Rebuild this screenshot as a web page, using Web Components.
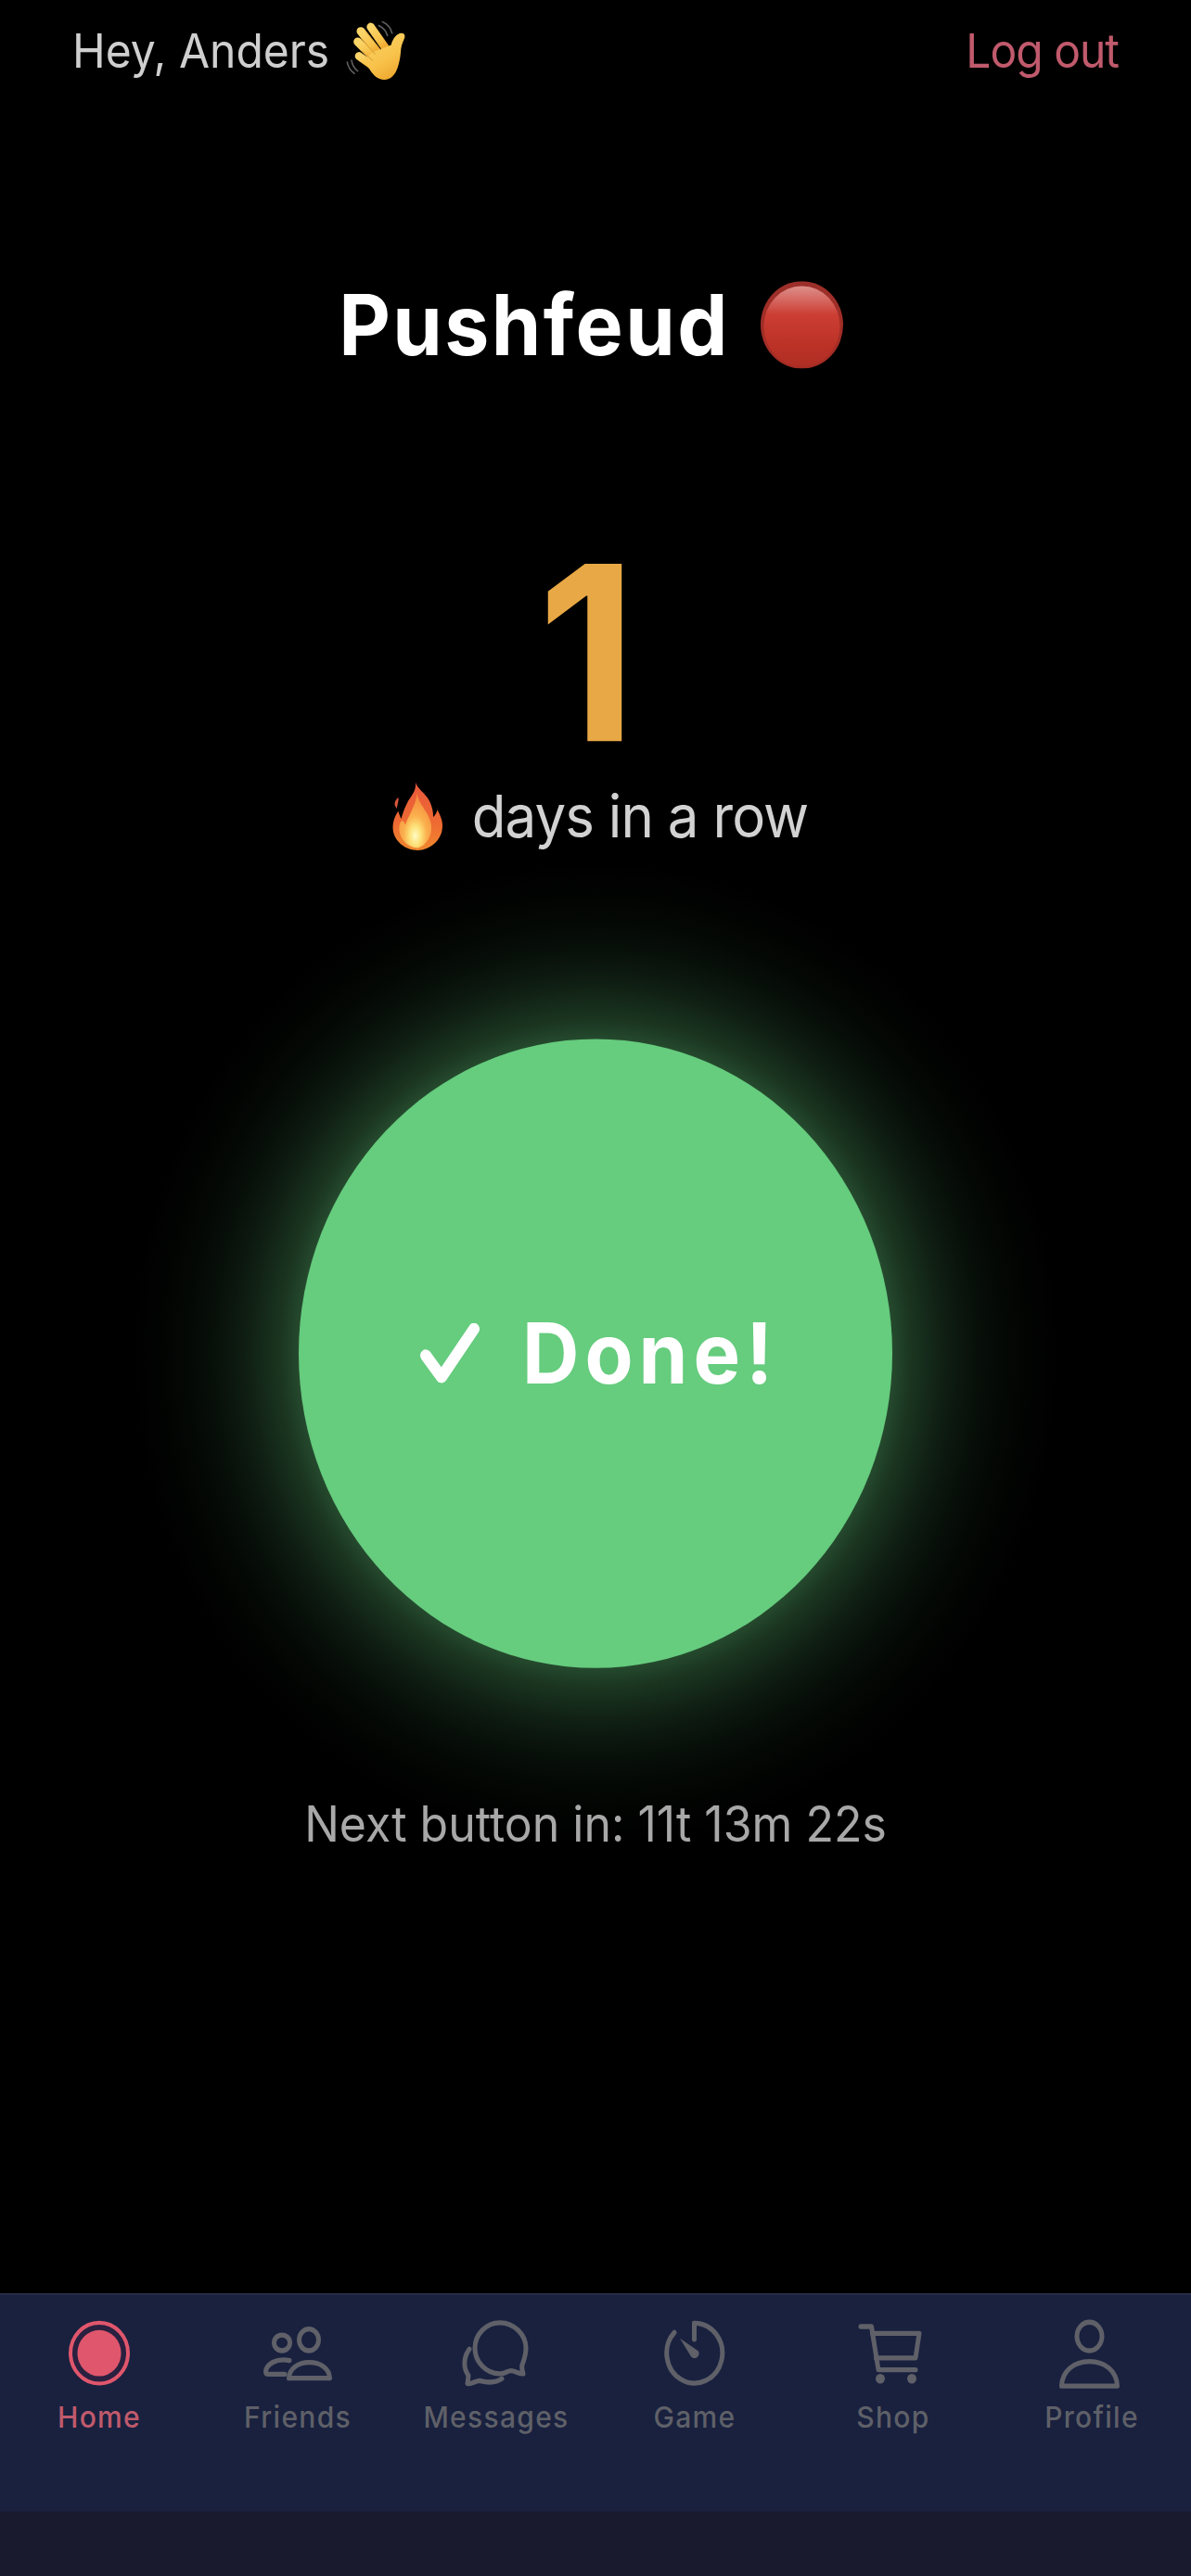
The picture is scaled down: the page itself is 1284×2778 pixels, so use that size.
<!DOCTYPE html>
<html>
<head>
<meta charset="utf-8">
<style>
  html, body { margin: 0; background: #000; overflow: hidden; }
  body { width: 1284px; height: 2778px; font-family: Inter, Roboto, "Liberation Sans", sans-serif; }
</style>
</head>
<body>
<app-shell>
  <top-bar slot="top" name="Hey, Anders"></top-bar>
  <app-title slot="title">Pushfeud</app-title>
  <streak-count slot="streak" count="1"></streak-count>
  <done-button slot="button">Done!</done-button>
  <next-timer slot="timer">Next button in: 11t 13m 22s</next-timer>
  <tab-bar slot="tabs">
    <tab-item label="Home" icon="home" active></tab-item>
    <tab-item label="Friends" icon="friends"></tab-item>
    <tab-item label="Messages" icon="messages"></tab-item>
    <tab-item label="Game" icon="game"></tab-item>
    <tab-item label="Shop" icon="shop"></tab-item>
    <tab-item label="Profile" icon="profile"></tab-item>
  </tab-bar>
</app-shell>

<script>
// the app in the screenshot is stretched vertically by about 6%, so the shell
// lays out at 2620px and scales up to the full window height
class AppShell extends HTMLElement {
  constructor() {
    super();
    this.attachShadow({ mode: "open" });
    this.shadowRoot.innerHTML = `
      <style>
        :host {
          display: flex;
          flex-direction: column;
          width: 1284px;
          height: 2620.75px;
          transform: scaleY(1.06);
          transform-origin: top left;
        }
        .main {
          flex: 1;
          display: flex;
          flex-direction: column;
          align-items: center;
        }
      </style>
      <slot name="top"></slot>
      <div class="main">
        <slot name="title"></slot>
        <slot name="streak"></slot>
        <slot name="button"></slot>
        <slot name="timer"></slot>
      </div>
      <slot name="tabs"></slot>
    `;
  }
}

class TopBar extends HTMLElement {
  constructor() {
    super();
    this.attachShadow({ mode: "open" });
    this.shadowRoot.innerHTML = `
      <style>
        :host {
          display: flex;
          justify-content: space-between;
          padding: 22px 78px 0;
          font-size: 48px;
          line-height: 60px;
          color: #cfcfcf;
        }
        .hey { display: flex; align-items: center; gap: 18px; height: 60px; }
        .logout { color: #c05a6c; letter-spacing: -1px; }
        svg { width: 64px; height: 62px; display: block; flex: none; }
      </style>
      <div class="hey">
        <span>${this.getAttribute("name")}</span>
        <svg viewBox="40 18 192 196" preserveAspectRatio="none">
          <defs>
            <linearGradient id="hand" x1=".2" y1="0" x2=".7" y2="1">
              <stop offset="0" stop-color="#fbd468"/>
              <stop offset=".6" stop-color="#f8c24a"/>
              <stop offset="1" stop-color="#eea62e"/>
            </linearGradient>
          </defs>
          <g fill="none" stroke="#5c5c5c" stroke-width="5" stroke-linecap="round">
            <path d="M146 34c14 6 24 18 28 32M158 22c14 6 26 18 31 36"/>
            <path d="M58 146c2 14 9 26 20 34M44 152c3 14 11 28 23 36"/>
          </g>
          <g fill="none" stroke="url(#hand)" stroke-linecap="round">
            <path d="M120 38L172 112" stroke-width="26"/>
            <path d="M88 52L150 130" stroke-width="27"/>
            <path d="M78 86L136 144" stroke-width="27"/>
            <path d="M82 132L132 168" stroke-width="26"/>
          </g>
          <path fill="url(#hand)" d="M125 120L186 96c4-14 12-30 26-36 12-4 20 0 18 12-4 12-10 22-12 36-2 18-2 34-10 58-8 26-24 42-44 42-22 0-36-14-48-34-6-10-14-18-22-26z"/>
          <g fill="none" stroke="#c98f2a" stroke-width="2.5" stroke-linecap="round">
            <path d="M104 52L152 112"/>
            <path d="M90 76L134 126"/>
            <path d="M92 116L126 146"/>
          </g>
        </svg>
      </div>
      <div class="logout">Log out</div>
    `;
  }
}

class AppTitle extends HTMLElement {
  constructor() {
    super();
    this.attachShadow({ mode: "open" });
    this.shadowRoot.innerHTML = `
      <style>
        :host {
          display: flex;
          align-items: center;
          gap: 33px;
          margin-top: 198px;
          padding-right: 10px;
          font-size: 86px;
          line-height: 100px;
          font-weight: 700;
          letter-spacing: 2.400px;
          color: #fff;
        }
        svg { width: 89px; height: 89px; display: block; }
      </style>
      <slot></slot>
      <svg viewBox="0 0 90 90">
        <defs>
          <linearGradient id="rim" x1="0" y1="0" x2="0" y2="1">
            <stop offset="0" stop-color="#9c2f2a"/>
            <stop offset="1" stop-color="#a62c24"/>
          </linearGradient>
          <linearGradient id="red" x1="0" y1="0" x2="0" y2="1">
            <stop offset="0" stop-color="#dd8f8b"/>
            <stop offset=".36" stop-color="#cc3d32"/>
            <stop offset=".72" stop-color="#bc3227"/>
            <stop offset="1" stop-color="#b02e24"/>
          </linearGradient>
        </defs>
        <circle cx="45" cy="45" r="45" fill="url(#rim)"/>
        <circle cx="45" cy="46.5" r="41.5" fill="url(#red)"/>
      </svg>
    `;
  }
}

class StreakCount extends HTMLElement {
  constructor() {
    super();
    this.attachShadow({ mode: "open" });
    this.shadowRoot.innerHTML = `
      <style>
        :host {
          display: flex;
          flex-direction: column;
          align-items: center;
          margin-top: 169px;
        }
        .count {
          padding-right: 18px;
          font-size: 248px;
          line-height: 230px;
          font-weight: 700;
          color: #e8a845;
        }
        .row {
          display: flex;
          align-items: center;
          gap: 31px;
          margin-top: 16px;
          padding-left: 10px;
          font-size: 60px;
          line-height: 70px;
          letter-spacing: -.95px;
          color: #d2d2d2;
        }
        svg { width: 55px; height: 70px; display: block; }
      </style>
      <div class="count">${this.getAttribute("count")}</div>
      <div class="row">
        <svg viewBox="33 33 165 225" preserveAspectRatio="none">
          <defs>
            <linearGradient id="flameOut" x1="0" y1="0" x2="0" y2="1">
              <stop offset="0" stop-color="#e9583c"/>
              <stop offset=".6" stop-color="#ee6a32"/>
              <stop offset="1" stop-color="#f0882e"/>
            </linearGradient>
            <radialGradient id="flameIn" cx=".5" cy=".78" r=".72">
              <stop offset="0" stop-color="#fffbc4"/>
              <stop offset=".24" stop-color="#fde27a"/>
              <stop offset=".5" stop-color="#fbb04e"/>
              <stop offset="1" stop-color="#f58a3c"/>
            </radialGradient>
          </defs>
          <path fill="#d9573a" d="M52 85c3 14-4 25-4 37-6-7-10-14-6-22 2-6 6-10 10-15z"/>
          <path fill="url(#flameOut)" d="M108 35c4 25 42 40 52 80 5 15 5 25 5 35 5-5 13-15 13-25 14 25 20 45 16 65-4 35-39 68-79 68-40 0-77-30-80-68-2-25 7-45 17-60 3 10 6 18 10 25 6-25 13-40 23-60 15-20 25-35 23-60z"/>
          <path fill="url(#flameIn)" d="M112 70c6 40 38 60 46 100 7 40-18 75-43 80-30 0-57-25-60-60 0-25 10-40 20-15 4-15 14-30 22-50 8-18 15-35 15-55z"/>
        </svg>
        <span>days in a row</span>
      </div>
    `;
  }
}

class DoneButton extends HTMLElement {
  constructor() {
    super();
    this.attachShadow({ mode: "open" });
    this.shadowRoot.innerHTML = `
      <style>
        :host {
          position: relative;
          display: flex;
          align-items: center;
          justify-content: center;
          gap: 46px;
          flex: none;
          box-sizing: border-box;
          width: 640px;
          height: 640px;
          padding-left: 8px;
          margin-top: 192px;
          border-radius: 50%;
          background: #66cc7e;
          color: #fff;
          font-size: 85px;
          font-weight: 700;
          letter-spacing: 6px;
        }
        /* glow sits behind the disc; a big box-shadow goes blocky under the scale */
        :host::before {
          content: "";
          position: absolute;
          inset: -180px;
          z-index: -1;
          border-radius: 50%;
          background: radial-gradient(circle closest-side,
            rgba(102, 204, 126, .36) 64%,
            rgba(102, 204, 126, .26) 68%,
            rgba(102, 204, 126, .2) 72%,
            rgba(102, 204, 126, .14) 76%,
            rgba(102, 204, 126, .08) 82%,
            rgba(102, 204, 126, .04) 88%,
            rgba(102, 204, 126, .015) 94%,
            rgba(102, 204, 126, 0) 100%);
        }
        svg { width: 64px; height: 62px; display: block; }
      </style>
      <svg viewBox="0 0 64 62">
        <path d="M6 33 L23 55 L58 6" fill="none" stroke="#fff" stroke-width="12" stroke-linecap="round" stroke-linejoin="round"/>
      </svg>
      <span><slot></slot></span>
    `;
  }
}

class NextTimer extends HTMLElement {
  constructor() {
    super();
    this.attachShadow({ mode: "open" });
    this.shadowRoot.innerHTML = `
      <style>
        :host {
          display: block;
          margin-top: 129px;
          font-size: 50px;
          line-height: 60px;
          color: #a8a8a8;
        }
      </style>
      <slot></slot>
    `;
  }
}

class TabBar extends HTMLElement {
  constructor() {
    super();
    this.attachShadow({ mode: "open" });
    this.shadowRoot.innerHTML = `
      <style>
        :host {
          display: block;
          background: #1a1a2e;
          height: 288px;
        }
        .tabs {
          display: grid;
          grid-template-columns: repeat(6, 1fr);
          height: 222px;
          box-sizing: border-box;
          padding-top: 27px;
          background: #19213f;
          border-top: 2px solid #262c47;
        }
      </style>
      <div class="tabs"><slot></slot></div>
    `;
  }
}

const TAB_ICONS = {
  home: `<circle cx="38" cy="32" r="31" fill="#2a2040" stroke="#e0566c" stroke-width="4"/>
    <circle cx="38" cy="32" r="23.5" fill="#e0566c"/>`,
  friends: `<g fill="none" stroke="#5f6068" stroke-width="5" stroke-linecap="round" stroke-linejoin="round">
      <ellipse cx="50" cy="18.5" rx="10.5" ry="11"/>
      <ellipse cx="21" cy="21.5" rx="8.5" ry="8"/>
      <path d="M29 39.5C15 37 4 43 3.5 51c0 1.5 1 2.5 3 2.5H24"/>
      <path d="M28.5 57.5C29 48 38 41.5 50.5 41.5S72 48 72.5 57.5z"/>
    </g>`,
  messages: `<g fill="none" stroke="#5f6068" stroke-width="5" stroke-linecap="round" stroke-linejoin="round">
      <path d="M42 1C27 1 15 13 15 27c0 14 12 26 27 26 5 0 8-3 12-3 4 0 8 3 13 3-1-3-2-6-1-9 2-5 4-10 4-17C70 13 57 1 42 1z"/>
      <path d="M9 28C5 33 3.5 38 4 44c0 4 2 8 4 11l-1 8c4 1 9-3 13-3 8 2 17 3 24-2"/>
    </g>`,
  game: `<g fill="none" stroke="#5f6068" stroke-width="5" stroke-linecap="round">
      <path d="M37.5 1.5A30 30.5 0 1 1 16 11"/>
      <path d="M37.5 1.5V18"/>
    </g>
    <path d="M22 17L42 30c1.500 3 0 6-3 7-2.500.5-5-.5-6-3z" fill="#5f6068"/>`,
  shop: `<g fill="none" stroke="#5f6068" stroke-width="5" stroke-linecap="round" stroke-linejoin="round">
      <path d="M3 5H14.500L22 49H62"/>
      <path d="M15.500 12H66L62 37H19.500"/>
    </g>
    <circle cx="24" cy="58" r="5" fill="#5f6068"/>
    <circle cx="58" cy="58" r="5" fill="#5f6068"/>`,
  profile: `<g fill="none" stroke="#5f6068" stroke-width="5" stroke-linecap="round" stroke-linejoin="round">
      <ellipse cx="35.500" cy="15" rx="13.500" ry="14.500"/>
      <path d="M5.500 65.500C6 50 19 40.500 35.500 40.500S65 50 65.500 65.500z"/>
    </g>`,
};

class TabItem extends HTMLElement {
  constructor() {
    super();
    this.attachShadow({ mode: "open" });
    const active = this.hasAttribute("active");
    this.shadowRoot.innerHTML = `
      <style>
        :host {
          display: flex;
          flex-direction: column;
          align-items: center;
          gap: 7px;
          font-size: 30px;
          font-weight: 500;
          line-height: 36px;
          letter-spacing: 1.300px;
          color: ${active ? "#c05a6c" : "#5f6068"};
        }
        svg { width: 76px; height: 72px; display: block; overflow: visible; }
      </style>
      <svg viewBox="0 0 76 72">${TAB_ICONS[this.getAttribute("icon")]}</svg>
      <span>${this.getAttribute("label")}</span>
    `;
  }
}

customElements.define("app-shell", AppShell);
customElements.define("top-bar", TopBar);
customElements.define("app-title", AppTitle);
customElements.define("streak-count", StreakCount);
customElements.define("done-button", DoneButton);
customElements.define("next-timer", NextTimer);
customElements.define("tab-bar", TabBar);
customElements.define("tab-item", TabItem);
</script>
</body>
</html>
